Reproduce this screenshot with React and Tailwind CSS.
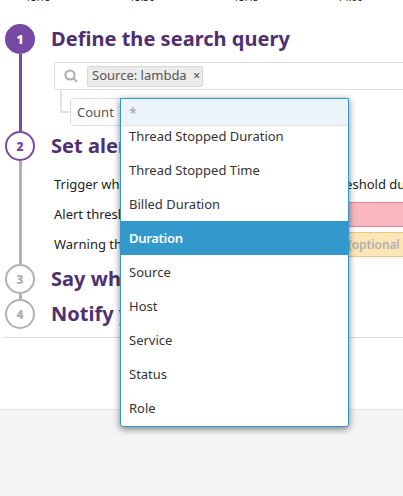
const ticks = ["13:15", "13:30", "13:45", "14:00"];

const options = [
  "Thread Stopped Duration",
  "Thread Stopped Time",
  "Billed Duration",
  "Duration",
  "Source",
  "Host",
  "Service",
  "Status",
  "Role",
];

const tones = {
  done: "border-[#774aa4] bg-[#774aa4] text-white",
  active: "border-[#774aa4] bg-white text-[#774aa4]",
  idle: "border-[#b1b1b5] bg-white text-[#b1b1b5]",
};

function Step({ number, title, tone, line, height, children }) {
  return (
    <section className={`flex ${height}`}>
      <div className="flex w-[30px] shrink-0 flex-col items-center">
        <div
          className={`flex size-[30px] shrink-0 items-center justify-center rounded-full border-2 pt-px text-[12px] leading-none font-black ${tones[tone]}`}
        >
          {number}
        </div>
        {line && <div className={`w-[3px] flex-1 ${line}`} />}
      </div>
      <div className="ml-4 min-w-0 flex-1">
        <h2 className="h-[30px] text-[20px] leading-[30px] font-bold tracking-[0.03px] whitespace-nowrap text-[#50306f]">
          {title}
        </h2>
        {children}
      </div>
    </section>
  );
}

function Dropdown() {
  return (
    <div className="absolute top-[-1px] left-[49px] z-10 flex h-[329px] w-[229px] flex-col overflow-hidden rounded-b-[3px] border border-[#3399cc] bg-white shadow-[0_2px_7px_rgba(0,0,0,0.5)]">
      <div className="h-[27px] shrink-0 border-b border-[#e2e5e8] bg-[#ebf3fb] pl-2 text-[14px] leading-[28px] font-medium text-[#a8abaf]">
        *
      </div>
      <ul className="-mt-[7px] text-[13px] text-[#333]">
        {options.map((option, i) => (
          <li
            key={option}
            className={`h-[34px] pl-2 leading-[34px] ${i === 0 ? "[clip-path:inset(7px_0_0_0)]" : ""} ${
              option === "Duration" ? "bg-[#3399cc] font-semibold tracking-[-0.3px] text-white" : ""
            }`}
          >
            {option}
          </li>
        ))}
      </ul>
    </div>
  );
}

export default function App() {
  return (
    <div className="flex h-[496px] w-[403px] flex-col overflow-hidden bg-white font-['Noto_Sans','Open_Sans',sans-serif] text-[13px] text-[#333]">
      <div className="flex h-6 shrink-0">
        <div className="-ml-[14px] flex shrink-0">
          {ticks.map((tick) => (
            <span key={tick} className="-mt-[9px] w-[104px] text-center text-[10px] leading-[12px] text-[#222]">
              {tick}
            </span>
          ))}
        </div>
      </div>
      <main className="h-[314px] shrink-0 pl-[5px]">
        <Step number="1" title="Define the search query" tone="done" line="bg-[#774aa4]" height="h-[107px]">
          <div className="ml-[3px] pt-2">
            <div className="flex h-7 w-[400px] items-center rounded-[3px] border border-[#ddd]">
              <svg className="ml-[9px] size-[14px]" viewBox="0 0 14 14" fill="none" stroke="#acacac" strokeWidth="2">
                <circle cx="6" cy="6" r="4.6" />
                <path d="M9.4 9.4 12.8 12.8" />
              </svg>
              <span className="ml-[9px] flex h-[21px] w-[116px] items-center justify-between rounded-[2px] border border-[#d8d8d8] bg-[#ececec] pr-[2px] pb-px pl-1 text-[13px] leading-none whitespace-nowrap text-[#555]">
                Source: lambda
                <span className="pt-px text-[12px] font-medium">×</span>
              </span>
            </div>
            <div className="flex">
              <div className="-mt-[1px] ml-[6px] h-[24px] w-[10px] border-b-2 border-l-2 border-[#e3e3e3]" />
              <div className="relative mt-2 h-7 w-[200px] rounded-[3px] border border-[#ddd] bg-white pl-[6px] leading-[26px] text-[#555]">
                Count
                <Dropdown />
              </div>
            </div>
          </div>
        </Step>
        <Step number="2" title="Set alert conditions" tone="active" line="bg-[#b1b1b5]" height="h-[133px]">
          <div className="ml-[3px] pt-2 text-[#222]">
            <div className="flex h-[30px] items-center pt-px whitespace-nowrap">
              <span className="w-[286px] shrink-0">Trigger when the metric is above</span>
              <span>reshold du</span>
            </div>
            <div className="flex h-[30px] items-center">
              <span className="w-[206px] pt-[2px]">Alert threshold:</span>
              <span className="h-[25px] flex-1 border-y border-[#e6848d] bg-[#f9b7bf]" />
            </div>
            <div className="flex h-[30px] items-center">
              <span className="w-[206px] pt-[2px]">Warning threshold:</span>
              <span className="h-[25px] flex-1 border-y border-[#ecc67c] bg-[#fce6b8] pl-[88px] text-[12px] leading-[24px] font-semibold tracking-[-0.1px] whitespace-nowrap text-[#b3b1ae]">
                (optional
              </span>
            </div>
          </div>
        </Step>
        <Step number="3" title="Say what's happening" tone="idle" line="bg-[#b1b1b5]" height="h-[35px]" />
        <Step number="4" title="Notify your team" tone="idle" height="h-[30px]" />
        <div className="mt-[8px] -ml-[2px] h-px bg-[#ddd]" />
      </main>
      <footer className="mt-[71px] flex-1 border-t border-[#e3e3e3] bg-[#f4f4f4]" />
    </div>
  );
}
